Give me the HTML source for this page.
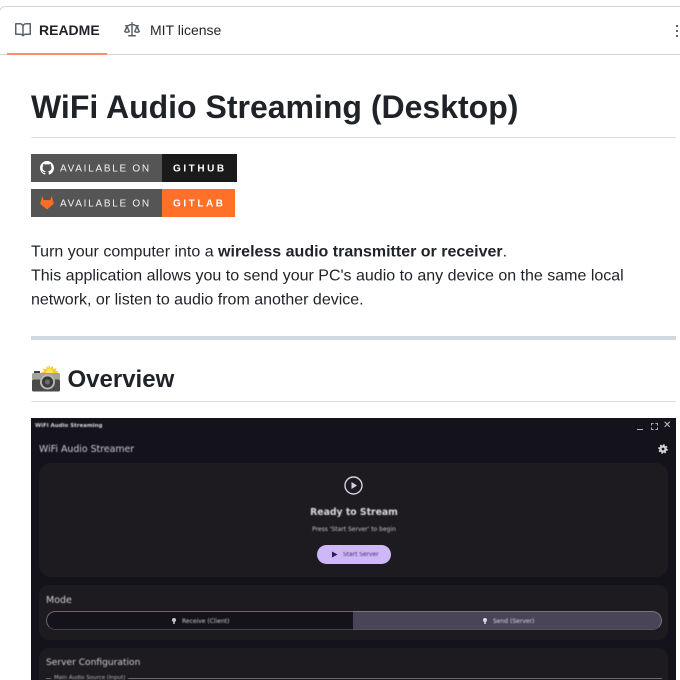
<!DOCTYPE html>
<html lang="en">
<head>
<meta charset="utf-8">
<title>WiFi Audio Streaming (Desktop)</title>
<style>
html,body{margin:0;padding:0;background:#fff}
body{width:680px;height:680px;overflow:hidden;position:relative;font-family:"Liberation Sans",sans-serif;color:#1f2328}
.a{position:absolute;white-space:nowrap}
.d{font-family:"DejaVu Sans","Liberation Sans",sans-serif}
.s{filter:blur(.45px)}
.b{filter:blur(.25px)}
</style>
</head>
<body>
<!-- Box outline -->
<div class="a" style="left:-1px;top:6px;width:700px;height:47px;border:1px solid #d1d9e0;border-radius:6px 0 0 0"></div>
<div class="a" style="left:7px;top:53px;width:100px;height:2px;background:#fd8c73"></div>

<!-- Tabs -->
<svg class="a" style="left:15px;top:22px" width="16" height="16" viewBox="0 0 16 16" fill="#59636e"><path d="M0 1.75A.75.75 0 0 1 .75 1h4.253c1.227 0 2.317.59 3 1.501A3.743 3.743 0 0 1 11.006 1h4.245a.75.75 0 0 1 .75.75v10.5a.75.75 0 0 1-.75.75h-4.507a2.25 2.25 0 0 0-1.591.659l-.622.621a.75.75 0 0 1-1.06 0l-.622-.621A2.25 2.25 0 0 0 5.258 13H.75a.75.75 0 0 1-.75-.75Zm7.251 10.324.004-5.073-.002-2.253A2.25 2.25 0 0 0 5.003 2.5H1.5v9h3.757a3.75 3.75 0 0 1 1.994.574ZM8.755 4.75l-.004 7.322a3.752 3.752 0 0 1 1.992-.572H14.5v-9h-3.495a2.25 2.25 0 0 0-2.25 2.25Z"/></svg>
<div class="a" style="left:39px;top:22px;font-size:14px;line-height:16px;font-weight:700">README</div>
<svg class="a" style="left:124px;top:22px" width="16" height="16" viewBox="0 0 16 16" fill="#59636e"><path d="M8.75.75V2h.985c.304 0 .603.08.867.231l1.29.736c.038.022.08.033.124.033h2.234a.75.75 0 0 1 0 1.5h-.427l2.111 4.692a.75.75 0 0 1-.154.838l-.53-.53.529.531-.001.002-.002.002-.006.006-.006.005-.01.01-.045.04c-.21.176-.441.327-.686.45C14.556 10.78 13.88 11 13 11a4.498 4.498 0 0 1-2.023-.454 3.544 3.544 0 0 1-.686-.45l-.045-.04-.016-.015-.006-.006-.004-.004v-.001a.75.75 0 0 1-.154-.838L12.178 4.5h-.162c-.305 0-.604-.079-.868-.231l-1.29-.736a.245.245 0 0 0-.124-.033H8.75V13h2.5a.75.75 0 0 1 0 1.5h-6.5a.75.75 0 0 1 0-1.5h2.5V3.5h-.984a.245.245 0 0 0-.124.033l-1.289.737c-.265.15-.564.23-.869.23h-.162l2.112 4.692a.75.75 0 0 1-.154.838l-.53-.53.529.531-.001.002-.002.002-.006.006-.016.015-.045.04c-.21.176-.441.327-.686.45C4.556 10.78 3.88 11 3 11a4.498 4.498 0 0 1-2.023-.454 3.544 3.544 0 0 1-.686-.45l-.045-.04-.016-.015-.006-.006-.004-.004v-.001a.75.75 0 0 1-.154-.838L2.178 4.5H1.75a.75.75 0 0 1 0-1.5h2.234a.249.249 0 0 0 .125-.033l1.288-.737c.265-.15.564-.23.869-.23h.984V.75a.75.75 0 0 1 1.5 0Zm2.945 8.477c.285.135.718.273 1.305.273s1.02-.138 1.305-.273L13 6.327Zm-10 0c.285.135.718.273 1.305.273s1.02-.138 1.305-.273L3 6.327Z"/></svg>
<div class="a" style="left:150px;top:22px;font-size:14px;line-height:16px;color:#1f2328">MIT license</div>
<div class="a" style="left:676px;top:25px;width:2px;height:2px;background:#59636e;box-shadow:0 5px 0 #59636e,0 10px 0 #59636e"></div>

<!-- Title -->
<div class="a" style="left:31px;top:87px;font-size:32px;line-height:40px;font-weight:700">WiFi Audio Streaming (Desktop)</div>
<div class="a" style="left:31px;top:137px;width:645px;height:1px;background:#d8dee4"></div>

<!-- Badge 1 -->
<div class="a" style="left:31px;top:154px;width:131px;height:28px;background:#555"></div>
<div class="a" style="left:162px;top:154px;width:75px;height:28px;background:#1a1a1a"></div>
<svg class="a" style="left:40px;top:161px" width="14" height="14" viewBox="0 0 16 16" fill="#fff"><path d="M8 0c4.42 0 8 3.58 8 8a8.013 8.013 0 0 1-5.45 7.59c-.4.08-.55-.17-.55-.38 0-.27.01-1.13.01-2.2 0-.75-.25-1.23-.54-1.48 1.78-.2 3.65-.88 3.65-3.95 0-.88-.31-1.59-.82-2.15.08-.2.36-1.02-.08-2.12 0 0-.67-.22-2.2.82-.64-.18-1.32-.27-2-.27-.68 0-1.36.09-2 .27-1.53-1.03-2.2-.82-2.2-.82-.44 1.1-.16 1.92-.08 2.12-.51.56-.82 1.28-.82 2.15 0 3.06 1.86 3.75 3.64 3.95-.23.2-.44.55-.51 1.07-.46.21-1.61.55-2.33-.66-.15-.24-.6-.83-1.23-.82-.67.01-.27.38.01.53.34.19.73.9.82 1.13.16.45.68 1.31 2.69.94 0 .67.01 1.3.01 1.49 0 .21-.15.45-.55.38A7.995 7.995 0 0 1 0 8c0-4.42 3.58-8 8-8Z"/></svg>
<div class="a b" style="left:60px;top:163px;font-size:10px;line-height:12px;letter-spacing:1.72px;color:#f2f2f2;transform:translateY(.5px)">AVAILABLE ON</div>
<div class="a b" style="left:173px;top:163px;font-size:10px;line-height:12px;letter-spacing:2.55px;color:#fff;font-weight:700;transform:translateY(.5px)">GITHUB</div>

<!-- Badge 2 -->
<div class="a" style="left:31px;top:189px;width:131px;height:28px;background:#555"></div>
<div class="a" style="left:162px;top:189px;width:73px;height:28px;background:#ff7028"></div>
<svg class="a" style="left:40px;top:195px" width="14" height="15" viewBox="0 0 14 14" fill="#fc6d26"><path d="M2.2.4 3.7 4.6h6.6L11.8.4 13.8 8.2 7 14 .2 8.2Z"/></svg>
<div class="a b" style="left:60px;top:198px;font-size:10px;line-height:12px;letter-spacing:1.72px;color:#f2f2f2;transform:translateY(.5px)">AVAILABLE ON</div>
<div class="a b" style="left:173px;top:198px;font-size:10px;line-height:12px;letter-spacing:2.55px;color:#fff;font-weight:700;transform:translateY(.5px)">GITLAB</div>

<!-- Paragraph -->
<div class="a" style="left:31px;top:240px;font-size:16px;line-height:24px;transform:translateY(.6px)">Turn your computer into a <b>wireless audio transmitter or receiver</b>.<br>This application allows you to send your PC's audio to any device on the same local<br>network, or listen to audio from another device.</div>
<div class="a" style="left:31px;top:336px;width:645px;height:4px;background:#d1d9e0"></div>

<!-- Overview heading -->
<svg class="a" style="left:32px;top:365px" width="28" height="27" viewBox="0 0 28 27">
  <path d="M17 0l1.4 3 2.6-2 .2 3.2 3.6-1.2-1.6 3 3.6.8-3 2.2H11l-2-1.8 3.4-.6-1.6-3 3.4.8.4-3.2 1.8 1.8Z" fill="#ffc61a"/>
  <circle cx="17.5" cy="7" r="3.6" fill="#ffe45a"/>
  <rect x="2" y="6" width="6" height="3" fill="#3f3f3f"/>
  <rect x="0" y="8" width="28" height="7" rx="1.5" fill="#a3a39a"/>
  <rect x="0" y="14.5" width="28" height="12" rx="1.5" fill="#4a4a4a"/>
  <circle cx="15.5" cy="17" r="7.5" fill="#b9b9b4"/>
  <circle cx="15.5" cy="17" r="5.6" fill="#3a3a3a"/>
  <circle cx="15.5" cy="17" r="2.6" fill="#6a6a6a"/>
</svg>
<div class="a" style="left:67.5px;top:365px;font-size:24px;line-height:30px;font-weight:700">Overview</div>
<div class="a" style="left:31px;top:401px;width:645px;height:1px;background:#d8dee4"></div>

<!-- App screenshot -->
<div class="a" style="left:31px;top:418px;width:645px;height:262px;background:#14121a;overflow:hidden;color:#e6e1e5">
  <div class="a d s" style="left:4px;top:4px;font-size:5.5px;line-height:8px;font-weight:700;color:#d8d6da">WiFi Audio Streaming</div>
  <div class="a" style="left:606px;top:11px;width:6px;height:1px;background:#b8b6ba"></div>
  <div class="a" style="left:620px;top:5px;width:5px;height:5px;border:1px dashed #a8a6aa"></div>
  <div class="a d" style="left:632px;top:2px;font-size:10px;line-height:12px;color:#c8c6ca">✕</div>
  <div class="a d s" style="left:8px;top:25px;font-size:9.4px;line-height:13px;color:#cfcdd2">WiFi Audio Streamer</div>
  <svg class="a" style="left:627px;top:26px" width="10" height="10" viewBox="0 0 10 10"><circle cx="5" cy="5" r="2.6" fill="none" stroke="#d4d2d6" stroke-width="2.4"/><circle cx="5" cy="5" r="4" fill="none" stroke="#d4d2d6" stroke-width="1.6" stroke-dasharray="1.6 1.54"/></svg>

  <!-- Panel 1 -->
  <div class="a" style="left:8px;top:45px;width:629px;height:114px;background:#1d1b20;border-radius:12px"></div>
  <svg class="a" style="left:313px;top:58px" width="19" height="19" viewBox="0 0 19 19"><circle cx="9.5" cy="9.5" r="8.5" fill="none" stroke="#d6cfe0" stroke-width="1.4"/><path d="M7.5 6v7l5.5-3.5Z" fill="#d6cfe0"/></svg>
  <div class="a d s" style="left:209px;top:88px;width:228px;text-align:center;font-size:9.3px;line-height:13px;font-weight:700;color:#dcd8e0">Ready to Stream</div>
  <div class="a d s" style="left:209px;top:107px;width:228px;text-align:center;font-size:6px;line-height:9px;color:#c6c3ca">Press 'Start Server' to begin</div>
  <div class="a" style="left:286px;top:127px;width:74px;height:19px;background:#cfb8f8;border-radius:10px"></div>
  <svg class="a" style="left:300px;top:133px" width="7" height="7" viewBox="0 0 7 7"><path d="M1 .5v6l5.5-3Z" fill="#2c1a55"/></svg>
  <div class="a d s" style="left:312px;top:133px;font-size:5.9px;line-height:9px;color:#3a2a60">Start Server</div>

  <!-- Panel 2 -->
  <div class="a" style="left:8px;top:167px;width:629px;height:55px;background:#1d1b20;border-radius:10px"></div>
  <div class="a d s" style="left:15px;top:176px;font-size:9.5px;line-height:13px;color:#d2d0d4">Mode</div>
  <div class="a" style="left:15px;top:193px;width:307px;height:19px;box-sizing:border-box;background:#14121a;border:1px solid #6a686e;border-right:0;border-radius:10px 0 0 10px;border-bottom-color:#46444a"></div>
  <div class="a" style="left:322px;top:193px;width:309px;height:19px;box-sizing:border-box;background:#4a4458;border:1px solid #77757b;border-left:0;border-radius:0 10px 10px 0;border-bottom-color:#55535a"></div>
  <div class="a" style="left:141px;top:200px;width:4px;height:4px;border-radius:50%;background:#c8c6ca;box-shadow:0 3px 0 -1px #c8c6ca"></div>
  <div class="a d s" style="left:151px;top:199px;font-size:6px;line-height:9px;color:#d0ced2">Receive (Client)</div>
  <div class="a" style="left:452px;top:200px;width:4px;height:4px;border-radius:50%;background:#dedce0;box-shadow:0 3px 0 -1px #dedce0"></div>
  <div class="a d s" style="left:462px;top:199px;font-size:6px;line-height:9px;color:#dad8dc">Send (Server)</div>

  <!-- Panel 3 -->
  <div class="a" style="left:8px;top:230px;width:629px;height:50px;background:#1d1b20;border-radius:10px"></div>
  <div class="a d s" style="left:15px;top:239px;font-size:9.1px;line-height:13px;color:#d2d0d4">Server Configuration</div>
  <div class="a" style="left:15px;top:260px;width:616px;height:1px;background:#6a686e"></div>
  <div class="a d s" style="left:20px;top:257px;padding:0 3px;background:#1d1b20;font-size:5.5px;line-height:7px;color:#b8b6ba">Main Audio Source (Input)</div>
</div>
</body>
</html>
